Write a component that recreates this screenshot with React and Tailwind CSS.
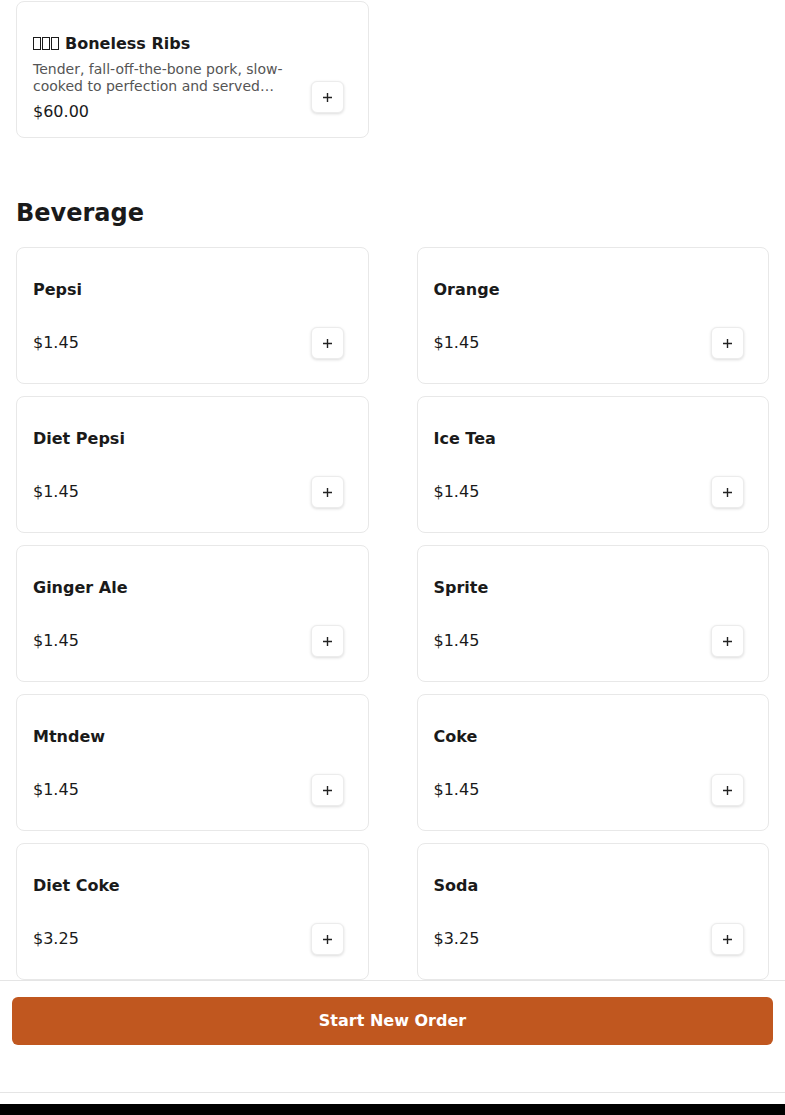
import React from "react";

const drinks = [
  ["Pepsi", "$1.45"],
  ["Orange", "$1.45"],
  ["Diet Pepsi", "$1.45"],
  ["Ice Tea", "$1.45"],
  ["Ginger Ale", "$1.45"],
  ["Sprite", "$1.45"],
  ["Mtndew", "$1.45"],
  ["Coke", "$1.45"],
  ["Diet Coke", "$3.25"],
  ["Soda", "$3.25"],
];

function PlusButton() {
  return (
    <button className="self-end mb-6 w-[33px] h-[32px] shrink-0 flex items-center justify-center rounded-md bg-white border border-[#ececec] shadow-[0_1px_3px_rgba(0,0,0,0.14)] text-[#1a1a1a]">
      <svg width="11" height="11" viewBox="0 0 11 11">
        <path d="M5.5 1v9M1 5.5h9" stroke="#222" strokeWidth="1.4" />
      </svg>
    </button>
  );
}

function Tofu() {
  return (
    <span className="inline-flex gap-[1px] mr-[6px] align-[-1px]">
      {[0, 1, 2].map((i) => (
        <span key={i} className="inline-block w-[8px] h-[13px] border border-[#1a1a1a]" />
      ))}
    </span>
  );
}

function DrinkCard({ name, price }) {
  return (
    <div className="h-[137px] rounded-lg border border-[#e8e8e8] bg-white pl-4 pr-6 flex justify-between">
      <div className="pt-[30px] flex flex-col">
        <div className="text-base leading-6 font-bold text-[#1a1a1a]">{name}</div>
        <div className="mt-[29px] text-base leading-6 text-[#1a1a1a]">{price}</div>
      </div>
      <PlusButton />
    </div>
  );
}

export default function App() {
  return (
    <div
      className="bg-white min-h-[1115px] flex flex-col"
      style={{ fontFamily: '"DejaVu Sans", "Noto Sans", sans-serif' }}
    >
      <div className="px-4 pt-[1px]">
        <div className="grid grid-cols-2 gap-x-12">
          <div className="h-[137px] rounded-lg border border-[#e8e8e8] bg-white pl-4 pr-6 flex justify-between">
            <div className="pt-[30px] flex flex-col">
              <div className="text-base leading-6 font-bold text-[#1a1a1a]">
                <Tofu />
                Boneless Ribs
              </div>
              <div className="mt-[5px] w-[260px] text-sm leading-[17px] text-[#555]">
                Tender, fall-off-the-bone pork, slow-cooked to perfection and served…
              </div>
              <div className="mt-[5px] text-base leading-6 text-[#1a1a1a]">$60.00</div>
            </div>
            <PlusButton />
          </div>
        </div>

        <h2 className="mt-[59px] mb-[18px] text-2xl leading-8 font-bold text-[#1a1a1a]">Beverage</h2>

        <div className="grid grid-cols-2 gap-x-12 gap-y-3">
          {drinks.map(([n, p]) => (
            <DrinkCard key={n} name={n} price={p} />
          ))}
        </div>
      </div>

      <div className="border-t border-[#e5e5e5] bg-white px-3 pt-4 pb-[47px] border-b">
        <button className="w-full h-12 rounded-md bg-[#c0571f] text-white font-bold text-base">
          Start New Order
        </button>
      </div>
      <div className="h-[11px] bg-white" />
      <div className="flex-1 bg-black" />
    </div>
  );
}
